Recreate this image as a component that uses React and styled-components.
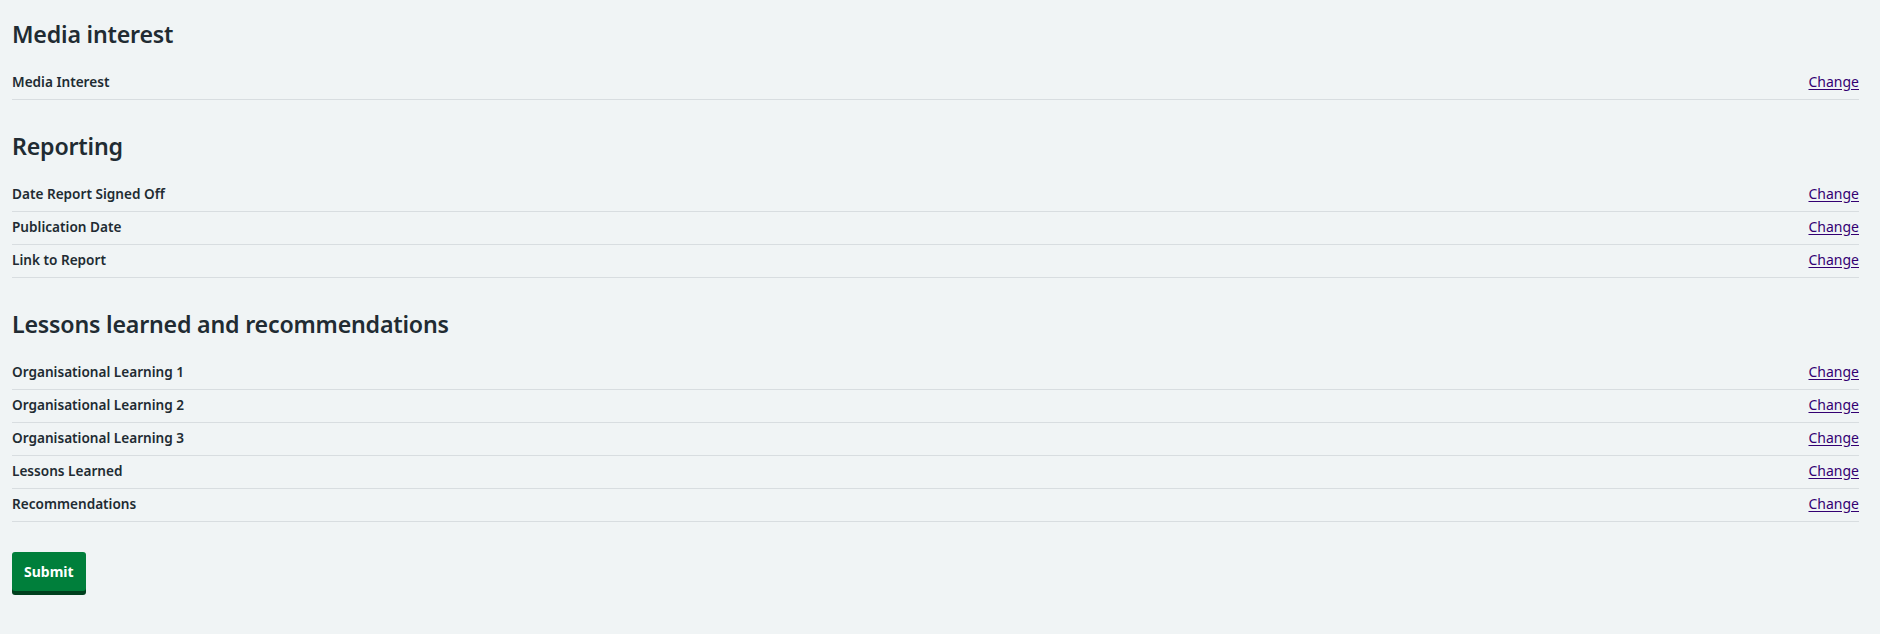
import React from 'react';
import styled, { createGlobalStyle } from 'styled-components';

const GlobalStyle = createGlobalStyle`
  html, body {
    margin: 0;
    padding: 0;
    background-color: #f0f4f5;
  }
  body {
    font-family: "Noto Sans", "Open Sans", Arial, sans-serif;
    color: #212b32;
  }
`;

const Page = styled.main`
  min-height: 100vh;
  padding: 18px 21px 40px 12px;
  box-sizing: border-box;
`;

const Section = styled.section`
  margin-bottom: 30px;
`;

const Heading = styled.h2`
  font-size: 23.2px;
  font-weight: 600;
  line-height: 32px;
  margin: 0 0 17px 0;
  letter-spacing: -0.2px;
`;

const List = styled.dl`
  margin: 0;
`;

const Row = styled.div`
  display: flex;
  justify-content: space-between;
  align-items: center;
  border-bottom: 1px solid #d8dde0;
  padding: 5px 0 7px 0;
  line-height: 20px;
`;

const Key = styled.dt`
  font-size: 13.6px;
  font-weight: 600;
  margin: 0;
`;

const Actions = styled.dd`
  margin: 0;
  font-size: 14px;
`;

const ChangeLink = styled.a`
  color: #330072;
  text-decoration: underline;
  text-underline-offset: 2px;
  cursor: pointer;
`;

const SubmitButton = styled.button`
  font-family: inherit;
  font-size: 14px;
  font-weight: 700;
  color: #ffffff;
  background-color: #007f3b;
  border: none;
  border-radius: 3px;
  box-shadow: 0 4px 0 #00401e;
  padding: 0 12px;
  height: 39px;
  cursor: pointer;
  margin-top: 0;
`;

const sections = [
  { title: 'Media interest', rows: ['Media Interest'] },
  {
    title: 'Reporting',
    rows: ['Date Report Signed Off', 'Publication Date', 'Link to Report'],
  },
  {
    title: 'Lessons learned and recommendations',
    rows: [
      'Organisational Learning 1',
      'Organisational Learning 2',
      'Organisational Learning 3',
      'Lessons Learned',
      'Recommendations',
    ],
  },
];

const App = () => {
  return (
    <>
      <GlobalStyle />
      <Page>
        {sections.map((s) => (
          <Section key={s.title}>
            <Heading>{s.title}</Heading>
            <List>
              {s.rows.map((r) => (
                <Row key={r}>
                  <Key>{r}</Key>
                  <Actions>
                    <ChangeLink href="#">Change</ChangeLink>
                  </Actions>
                </Row>
              ))}
            </List>
          </Section>
        ))}
        <SubmitButton type="submit">Submit</SubmitButton>
      </Page>
    </>
  );
};

export default App;
